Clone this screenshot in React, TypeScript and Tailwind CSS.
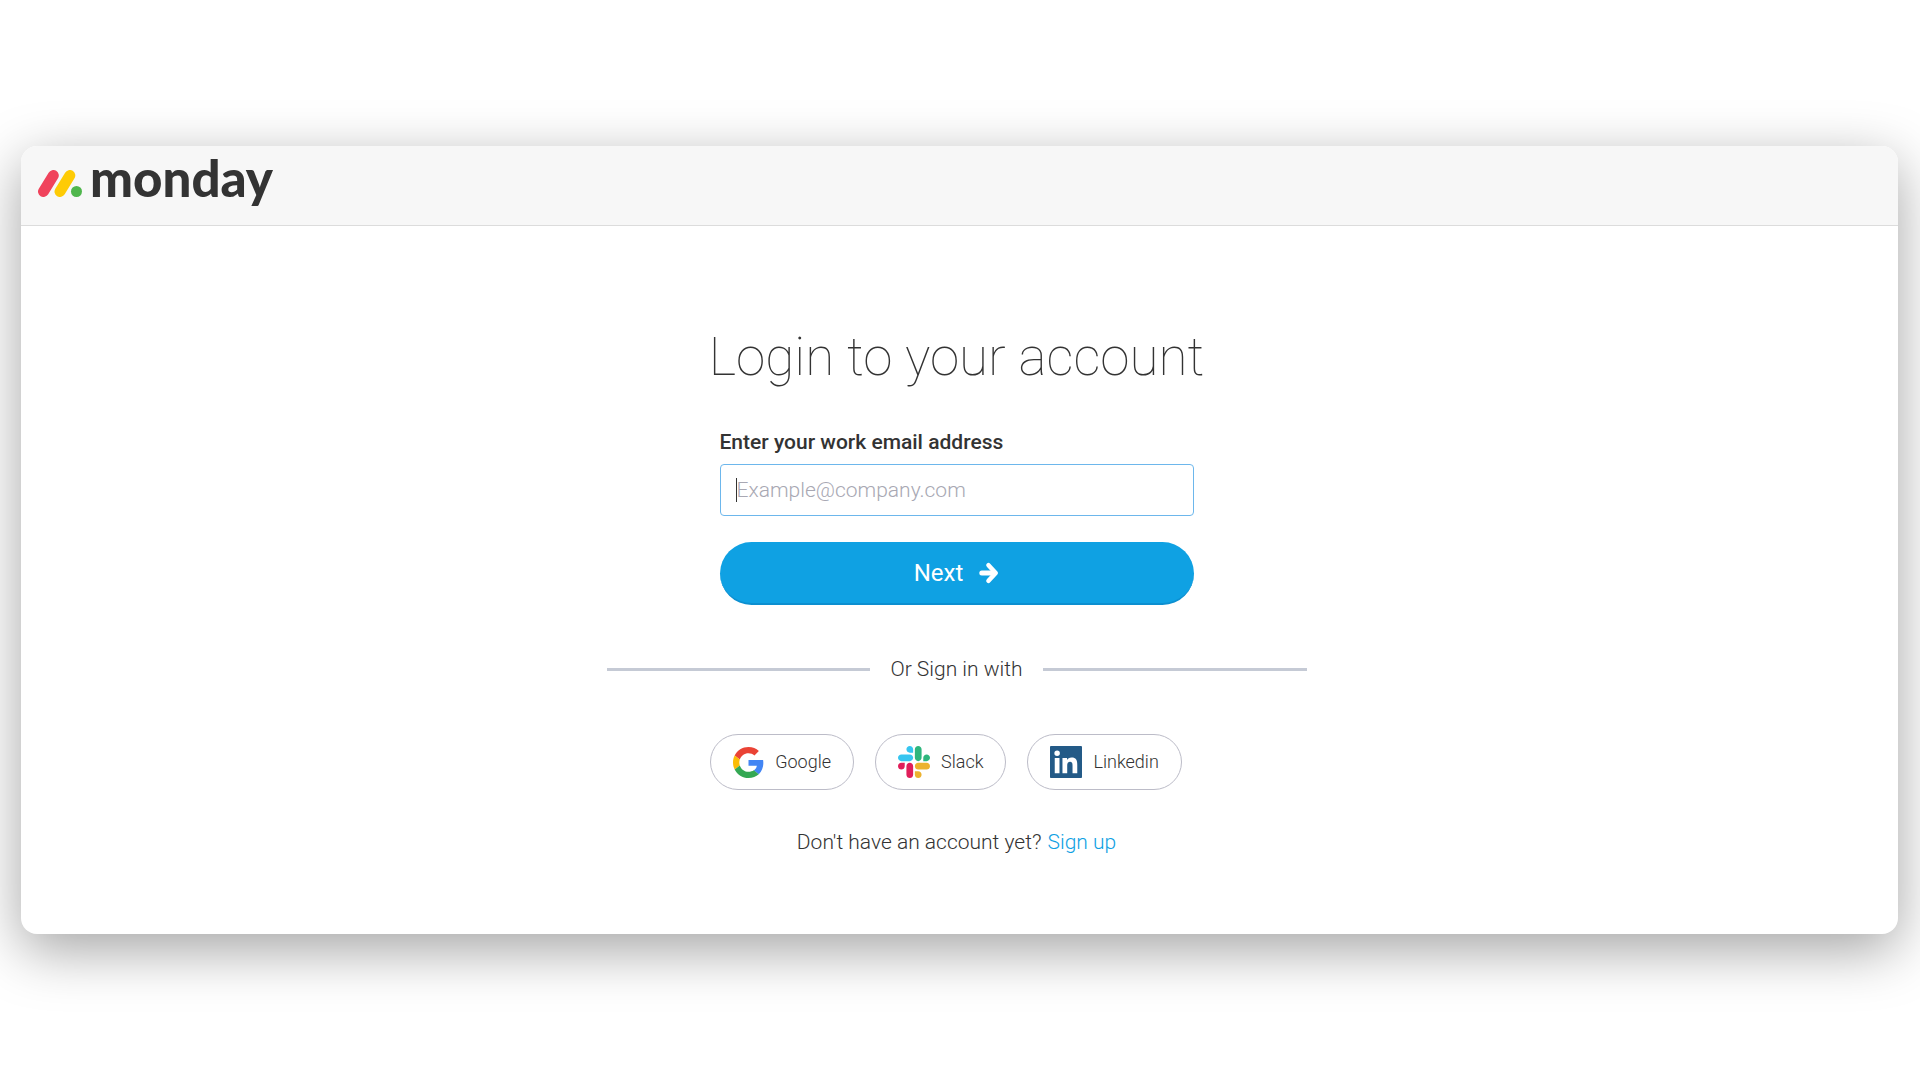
import React, { useState } from 'react';

interface SocialButtonProps {
  label: string;
  icon: React.ReactNode;
}

const MondayMark: React.FC = () => (
  <svg width="44" height="27" viewBox="0 0 44 27" fill="none" aria-hidden="true">
    <path d="M5.5 21.5 15.3 5.5" stroke="#f0435c" strokeWidth="11" strokeLinecap="round" />
    <path d="M22 21.5 31.8 5.5" stroke="#fecb05" strokeWidth="11" strokeLinecap="round" />
    <circle cx="38.5" cy="21.5" r="5.5" fill="#4fb64c" />
  </svg>
);

const ArrowIcon: React.FC = () => (
  <svg width="20" height="22" viewBox="0 0 20 22" fill="none" aria-hidden="true">
    <path d="M2.8 11H15" stroke="#fff" strokeWidth="5" strokeLinecap="round" />
    <path d="M9.5 3.3 16.7 11 9.5 18.7" stroke="#fff" strokeWidth="4.6" strokeLinecap="round" strokeLinejoin="round" />
  </svg>
);

const GoogleIcon: React.FC = () => (
  <svg width="31" height="31" viewBox="0 0 48 48" aria-hidden="true">
    <path fill="#EA4335" d="M24 9.5c3.54 0 6.71 1.22 9.21 3.6l6.85-6.85C35.9 2.38 30.47 0 24 0 14.62 0 6.51 5.38 2.56 13.22l7.98 6.19C12.43 13.72 17.74 9.5 24 9.5z" />
    <path fill="#4285F4" d="M46.98 24.55c0-1.57-.15-3.09-.38-4.55H24v9.02h12.94c-.58 2.96-2.26 5.48-4.78 7.18l7.73 6c4.51-4.18 7.09-10.36 7.09-17.65z" />
    <path fill="#FBBC05" d="M10.53 28.59c-.48-1.45-.76-2.99-.76-4.59s.27-3.14.76-4.59l-7.98-6.19C.92 16.46 0 20.12 0 24c0 3.88.92 7.54 2.56 10.78l7.97-6.19z" />
    <path fill="#34A853" d="M24 48c6.48 0 11.93-2.13 15.89-5.81l-7.73-6c-2.15 1.45-4.92 2.3-8.16 2.3-6.26 0-11.57-4.22-13.47-9.91l-7.98 6.19C6.51 42.62 14.62 48 24 48z" />
  </svg>
);

const SlackIcon: React.FC = () => (
  <svg width="32" height="32" viewBox="0 0 122.8 122.8" aria-hidden="true">
    <path fill="#E01E5A" d="M25.8 77.6c0 7.1-5.8 12.9-12.9 12.9S0 84.7 0 77.6s5.8-12.9 12.9-12.9h12.9v12.9zm6.5 0c0-7.1 5.8-12.9 12.9-12.9s12.9 5.8 12.9 12.9v32.3c0 7.1-5.8 12.9-12.9 12.9s-12.9-5.8-12.9-12.9V77.6z" />
    <path fill="#36C5F0" d="M45.2 25.8c-7.1 0-12.9-5.8-12.9-12.9S38.1 0 45.2 0s12.9 5.8 12.9 12.9v12.9H45.2zm0 6.5c7.1 0 12.9 5.8 12.9 12.9s-5.8 12.9-12.9 12.9H12.9C5.8 58.1 0 52.3 0 45.2s5.8-12.9 12.9-12.9h32.3z" />
    <path fill="#2EB67D" d="M97 45.2c0-7.1 5.8-12.9 12.9-12.9s12.9 5.8 12.9 12.9-5.8 12.9-12.9 12.9H97V45.2zm-6.5 0c0 7.1-5.8 12.9-12.9 12.9s-12.9-5.8-12.9-12.9V12.9C64.7 5.8 70.5 0 77.6 0s12.9 5.8 12.9 12.9v32.3z" />
    <path fill="#ECB22E" d="M77.6 97c7.1 0 12.9 5.8 12.9 12.9s-5.8 12.9-12.9 12.9-12.9-5.8-12.9-12.9V97h12.9zm0-6.5c-7.1 0-12.9-5.8-12.9-12.9s5.8-12.9 12.9-12.9h32.3c7.1 0 12.9 5.8 12.9 12.9s-5.8 12.9-12.9 12.9H77.6z" />
  </svg>
);

const LinkedinIcon: React.FC = () => (
  <svg width="32" height="32" viewBox="0 0 24 24" aria-hidden="true">
    <path fill="#235a87" d="M20.447 20.452h-3.554v-5.569c0-1.328-.027-3.037-1.852-3.037-1.853 0-2.136 1.445-2.136 2.939v5.667H9.351V9h3.414v1.561h.046c.477-.9 1.637-1.85 3.37-1.85 3.601 0 4.267 2.37 4.267 5.455v6.286zM5.337 7.433a2.062 2.062 0 0 1-2.063-2.065 2.064 2.064 0 1 1 2.063 2.065zm1.782 13.019H3.555V9h3.564v11.452zM23.2 0H.8C.36 0 0 .36 0 .8v22.4c0 .44.36.8.8.8h22.4c.44 0 .8-.36.8-.8V.8c0-.44-.36-.8-.8-.8z" />
  </svg>
);

const SocialButton: React.FC<SocialButtonProps> = ({ label, icon }) => (
  <button
    type="button"
    className="flex h-14 items-center gap-[11px] rounded-full border border-[#bcbcc8] bg-white px-[22px] text-lg font-light text-[#333333] hover:bg-gray-50"
  >
    {icon}
    <span>{label}</span>
  </button>
);

export default function App() {
  const [email, setEmail] = useState('');

  return (
    <div className="flex min-h-screen flex-col justify-center bg-white pr-[22px] pl-[21px] font-[Roboto,sans-serif] text-[#333333]">
      <div className="overflow-hidden rounded-2xl bg-white shadow-[0_16px_56px_rgba(0,0,0,0.36)]">
        <header className="flex h-20 items-start border-b border-[#dcdcdc] bg-[#f7f7f7] px-[17px]">
          <a href="#" className="flex items-baseline gap-2" aria-label="monday">
            <MondayMark />
            <span className="font-[Lato,sans-serif] text-[51px] leading-16 font-black">monday</span>
          </a>
        </header>

        <main className="flex flex-col items-center pt-24 pr-1.5 pb-[76px]">
          <h1 className="text-[53px] leading-[70px] font-thin">Login to your account</h1>

          <form className="mt-[34px] flex w-full max-w-[474px] flex-col" onSubmit={e => e.preventDefault()}>
            <label htmlFor="email" className="text-[21px] leading-8 font-medium">
              Enter your work email address
            </label>
            <div className="relative mt-1.5">
              <input
                id="email"
                type="email"
                className="h-[52px] w-full rounded border border-[#6db7ec] px-4 text-[21px] font-light caret-transparent outline-none placeholder:text-[#a8a8b3]"
                placeholder="Example@company.com"
                value={email}
                onChange={e => setEmail(e.target.value)}
              />
              {!email && <span className="absolute top-3.5 left-4 h-6 w-px bg-[#333333]" />}
            </div>
            <button
              type="submit"
              className="mt-[26px] flex h-[63px] items-center justify-center gap-4 rounded-full border-b-2 border-[#0c8fd0] bg-[#0fa1e3] text-2xl text-white"
            >
              Next
              <ArrowIcon />
            </button>
          </form>

          <div className="mt-12 flex w-full max-w-[700px] items-center gap-5">
            <span className="h-[3px] flex-1 bg-[#c5cad5]" />
            <span className="text-[21px] leading-8 font-light">Or Sign in with</span>
            <span className="h-[3px] flex-1 bg-[#c5cad5]" />
          </div>

          <div className="mt-[49px] mr-[21px] flex gap-[21px]">
            <SocialButton label="Google" icon={<GoogleIcon />} />
            <SocialButton label="Slack" icon={<SlackIcon />} />
            <SocialButton label="Linkedin" icon={<LinkedinIcon />} />
          </div>

          <p className="mt-9 flex gap-1.5 text-[21px] leading-8 font-light">
            Don't have an account yet?
            <a href="#" className="text-[#0fa1e3] hover:underline">
              Sign up
            </a>
          </p>
        </main>
      </div>
    </div>
  );
}
